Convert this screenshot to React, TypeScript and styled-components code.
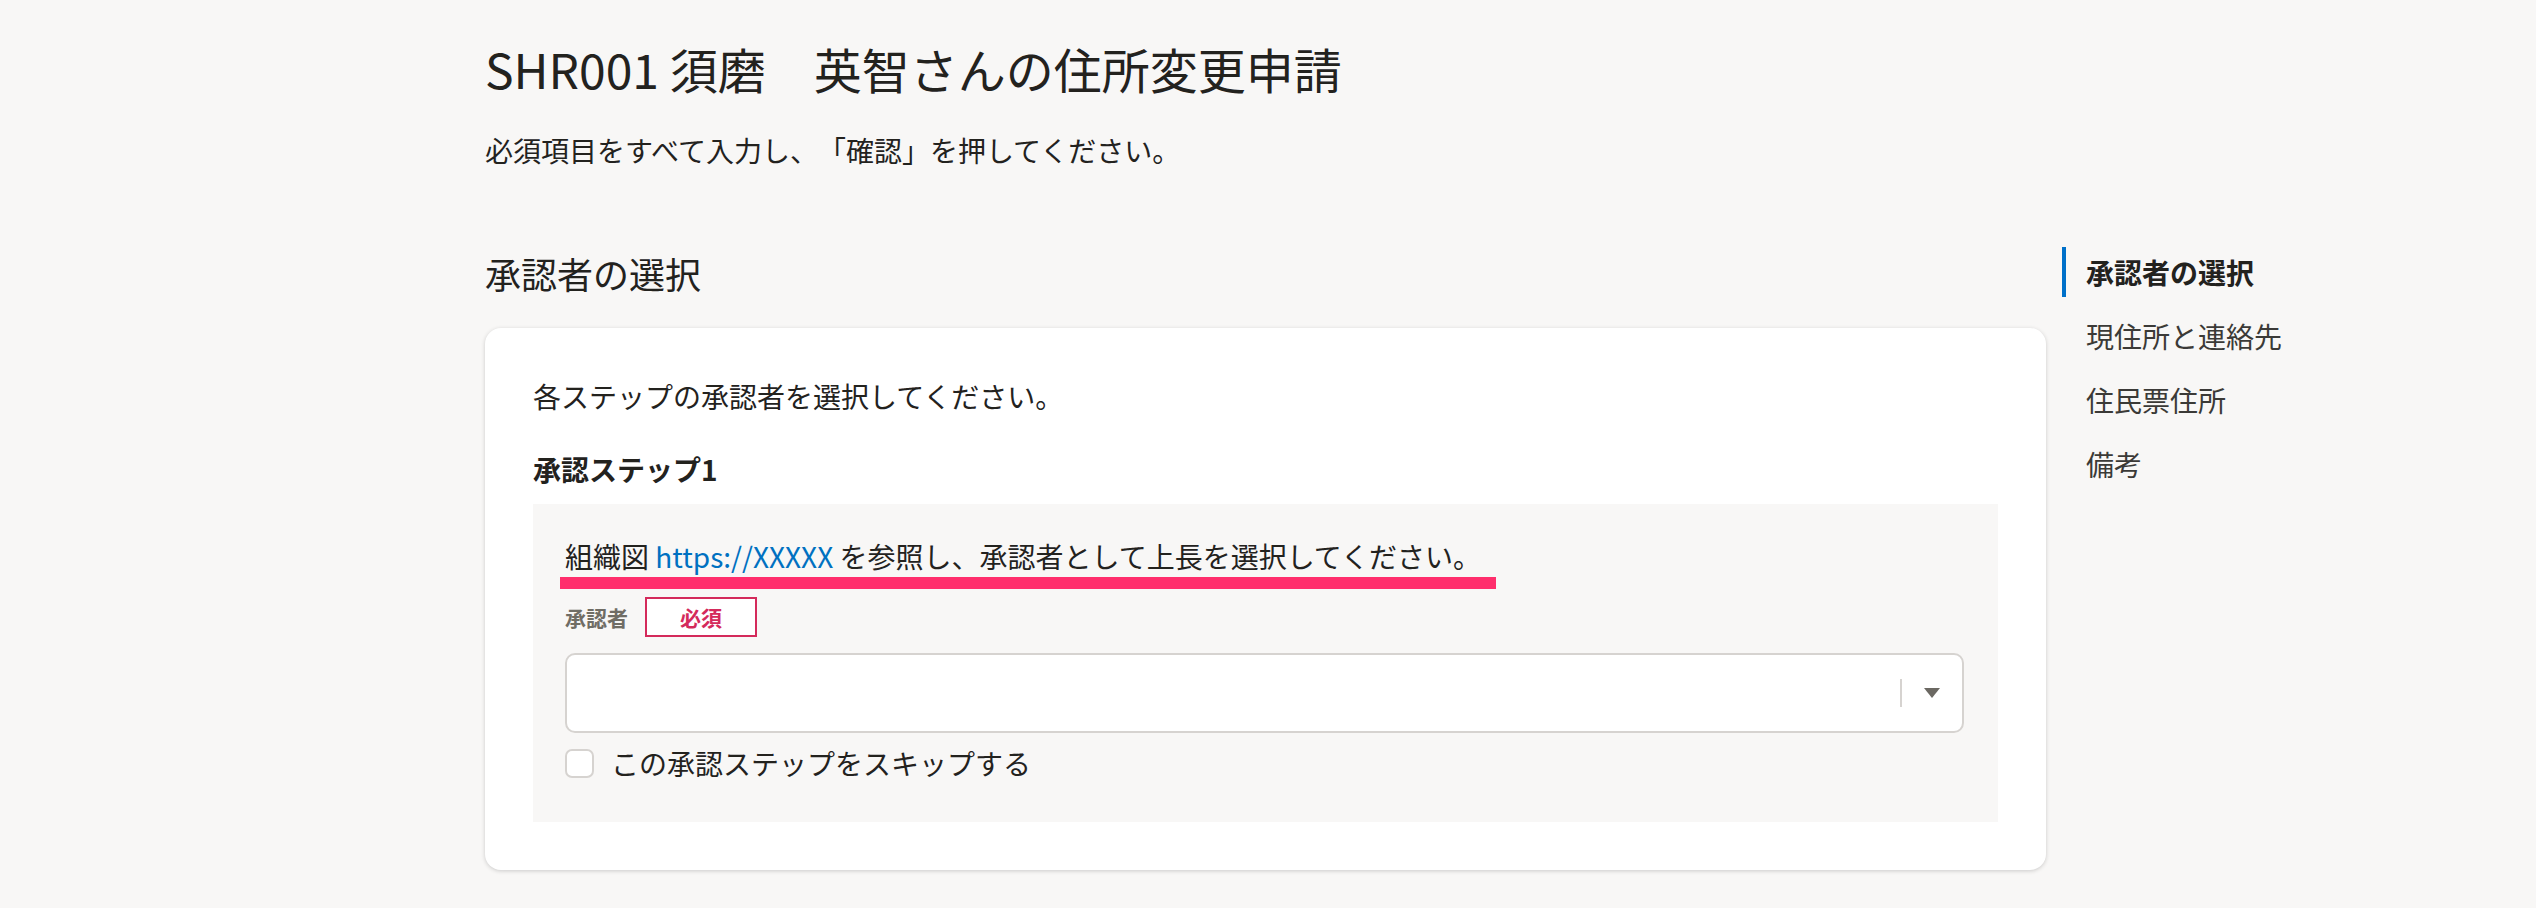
import styled, { createGlobalStyle } from "styled-components";

const navItems = [
  { id: 1, name: "承認者の選択", active: true },
  { id: 2, name: "現住所と連絡先", active: false },
  { id: 3, name: "住民票住所", active: false },
  { id: 4, name: "備考", active: false },
];

const GlobalStyle = createGlobalStyle`
  html, body {
    margin: 0;
    padding: 0;
    background: #f8f7f6;
  }
  body {
    font-family: "Noto Sans CJK JP", "Noto Sans", sans-serif;
    color: #23221e;
    text-spacing-trim: space-all;
  }
`;

function App() {
  return (
    <>
      <GlobalStyle />
      <Page>
        <Main>
          <Title>SHR001 須磨　英智さんの住所変更申請</Title>
          <Lead>必須項目をすべて入力し、「確認」を押してください。</Lead>

          <SectionTitle>承認者の選択</SectionTitle>
          <Card>
            <CardText>各ステップの承認者を選択してください。</CardText>
            <StepTitle>承認ステップ1</StepTitle>
            <StepBox>
              <Guide>
                組織図 <GuideLink href="#">https://XXXXX</GuideLink> を参照し、承認者として上長を選択してください。
              </Guide>
              <Highlight />
              <LabelRow>
                <FieldLabel>承認者</FieldLabel>
                <RequiredBadge>必須</RequiredBadge>
              </LabelRow>
              <SelectBox>
                <SelectSeparator />
                <svg width="16" height="10" viewBox="0 0 16 10">
                  <path d="M0 0 H16 L8 10 Z" fill="#6b6862" />
                </svg>
              </SelectBox>
              <CheckRow>
                <CheckBox />
                <span>この承認ステップをスキップする</span>
              </CheckRow>
            </StepBox>
          </Card>
        </Main>

        <Nav>
          {navItems.map((item) => (
            <NavItem key={item.id} active={item.active}>
              {item.name}
            </NavItem>
          ))}
        </Nav>
      </Page>
    </>
  );
}

const Page = styled.div`
  display: flex;
  align-items: flex-start;
  padding-left: 485px;
  min-height: 908px;
  box-sizing: border-box;
`;

const Main = styled.main`
  width: 1561px;
  flex-shrink: 0;
  padding-top: 35px;
`;

const Title = styled.h1`
  margin: 0;
  font-size: 48px;
  font-weight: 400;
  line-height: 66px;
`;

const Lead = styled.p`
  margin: 28px 0 0;
  font-size: 28px;
  line-height: 42px;
`;

const SectionTitle = styled.h2`
  margin: 77px 0 0;
  font-size: 36px;
  font-weight: 400;
  line-height: 50px;
`;

const Card = styled.section`
  margin-top: 30px;
  background: #fff;
  border-radius: 16px;
  box-shadow: 0 1px 4px rgba(0, 0, 0, 0.18);
  padding: 47px 48px 48px;
`;

const CardText = styled.p`
  margin: 0;
  font-size: 28px;
  line-height: 42px;
`;

const StepTitle = styled.h3`
  margin: 31px 0 0;
  font-size: 28px;
  font-weight: 700;
  line-height: 42px;
`;

const StepBox = styled.div`
  margin-top: 14px;
  background: #f8f7f6;
  padding: 31px 34px 38px 32px;
`;

const Guide = styled.p`
  margin: 0;
  font-size: 28px;
  line-height: 42px;
`;

const GuideLink = styled.a`
  color: #0071c1;
  text-decoration: none;
`;

const Highlight = styled.div`
  width: 936px;
  height: 12px;
  margin-left: -5px;
  background: #ff2e6c;
`;

const LabelRow = styled.div`
  display: flex;
  align-items: center;
  gap: 17px;
  margin-top: 8px;
`;

const FieldLabel = styled.span`
  font-size: 21px;
  font-weight: 700;
  color: #706d65;
`;

const RequiredBadge = styled.span`
  display: flex;
  align-items: center;
  justify-content: center;
  width: 112px;
  height: 40px;
  box-sizing: border-box;
  border: 2px solid #d42a5b;
  background: #fff;
  color: #d42a5b;
  font-size: 21px;
  font-weight: 700;
`;

const SelectBox = styled.div`
  margin-top: 16px;
  height: 80px;
  box-sizing: border-box;
  background: #fff;
  border: 2px solid #d6d3d0;
  border-radius: 10px;
  display: flex;
  align-items: center;
  justify-content: flex-end;
  gap: 22px;
  padding-right: 22px;
`;

const SelectSeparator = styled.div`
  width: 2px;
  height: 28px;
  background: #d6d3d0;
`;

const CheckRow = styled.label`
  display: flex;
  align-items: center;
  gap: 17px;
  margin-top: 9px;
  font-size: 28px;
  line-height: 42px;
`;

const CheckBox = styled.span`
  width: 29px;
  height: 29px;
  box-sizing: border-box;
  border: 2px solid #d6d3d0;
  border-radius: 7px;
  background: #fff;
`;

const Nav = styled.nav`
  margin-top: 247px;
  margin-left: 16px;
  display: flex;
  flex-direction: column;
  gap: 14px;
`;

const NavItem = styled.a<{ active: boolean }>`
  display: block;
  border-left: 4px solid ${(props) => (props.active ? "#0070c9" : "transparent")};
  padding-left: 20px;
  font-size: 28px;
  line-height: 50px;
  font-weight: ${(props) => (props.active ? 700 : 400)};
  color: ${(props) => (props.active ? "#23221e" : "#3b3a37")};
  white-space: nowrap;
`;

export default App;
